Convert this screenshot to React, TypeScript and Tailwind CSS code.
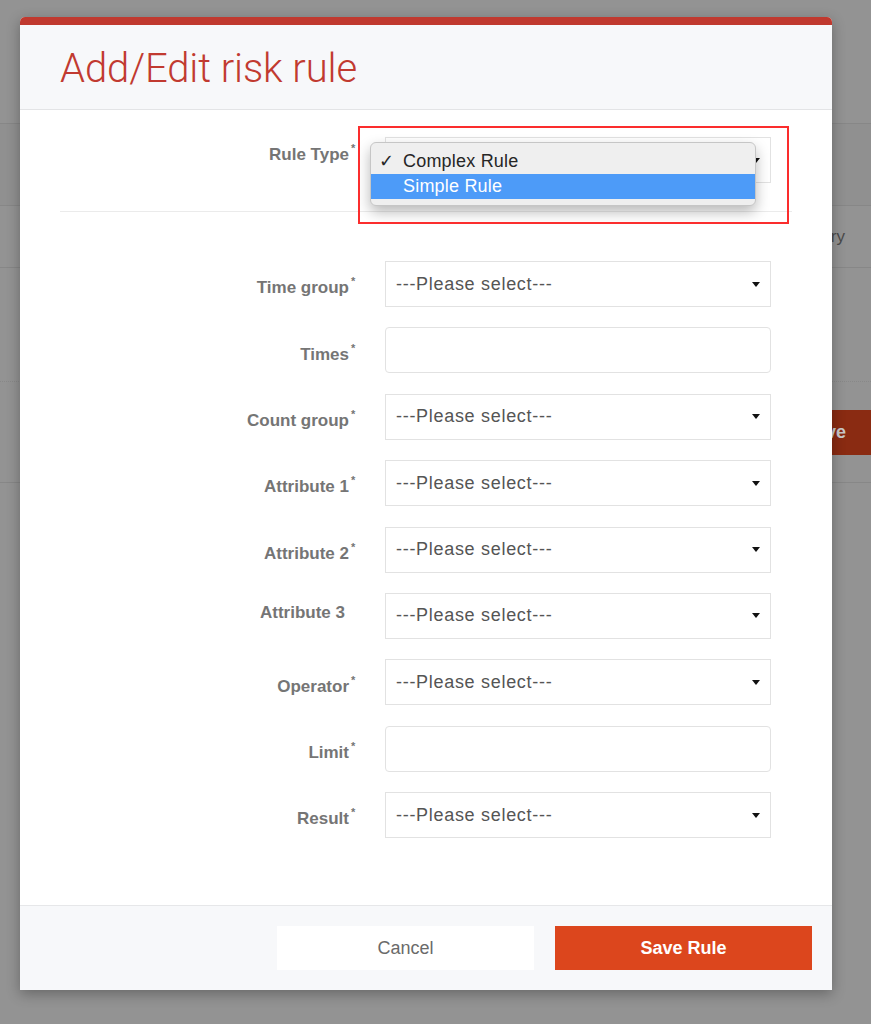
const fields = [
  { label: 'Time group', kind: 'select', required: true },
  { label: 'Times', kind: 'input', required: true },
  { label: 'Count group', kind: 'select', required: true },
  { label: 'Attribute 1', kind: 'select', required: true },
  { label: 'Attribute 2', kind: 'select', required: true },
  { label: 'Attribute 3', kind: 'select', required: false },
  { label: 'Operator', kind: 'select', required: true },
  { label: 'Limit', kind: 'input', required: true },
  { label: 'Result', kind: 'select', required: true },
];

function Caret() {
  return (
    <svg width="8" height="5" viewBox="0 0 8 5" className="shrink-0">
      <path d="M0 0 L8 0 L4 5 Z" fill="#111" />
    </svg>
  );
}

function Label({ text, required, className = '' }: { text: string; required: boolean; className?: string }) {
  return (
    <div className={`flex w-[297px] shrink-0 justify-end text-[17px] font-bold text-[#757575] ${className}`}>
      <span>{text}</span>
      {required ? <span className="mt-[1px] w-[8px] pl-[2px] text-[11px] leading-none">*</span> : null}
    </div>
  );
}

function FieldRow({ label, kind, required }: { label: string; kind: string; required: boolean }) {
  return (
    <div className="flex h-[46px] items-center">
      <Label text={label} required={required} className={required ? 'pt-[8px]' : 'pb-[6px] pr-[12px]'} />
      <div
        className={`ml-[28px] flex h-[46px] w-[386px] items-center justify-between border border-[#e2e2e2] bg-white pl-[10px] pr-[10px] ${
          kind === 'input' ? 'rounded-[4px]' : ''
        }`}
      >
        {kind === 'select' ? (
          <>
            <span className="text-[18px] tracking-[0.7px] text-[#555]">---Please select---</span>
            <Caret />
          </>
        ) : null}
      </div>
    </div>
  );
}

function BackgroundPage() {
  return (
    <div className="flex flex-col">
      <div className="h-[123px]" />
      <div className="h-[82px] border-t border-[#878787] bg-[#909090]" />
      <div className="flex h-[62px] items-center justify-end border-t border-[#878787] pr-[26px] text-[17px] text-[#4a4a4a]">
        Category
      </div>
      <div className="h-[114px] border-t border-[#878787]" />
      <div className="flex h-[101px] items-start justify-end border-t border-dotted border-[#888]">
        <div className="mt-[28px] flex h-[45px] w-[92px] items-center justify-center bg-[#8a2b12] text-[18px] font-bold text-[#c9c9c9]">
          Save
        </div>
      </div>
      <div className="border-t border-[#878787]" />
    </div>
  );
}

export default function App() {
  return (
    <div
      className="relative h-[1024px] w-[871px] overflow-hidden bg-[#939393]"
      style={{ fontFamily: '"Liberation Sans", Arial, sans-serif' }}
    >
      <BackgroundPage />

      <div className="absolute left-[20px] top-[17px] flex h-[973px] w-[812px] flex-col overflow-hidden rounded-t-[5px] bg-white shadow-[0_4px_14px_rgba(0,0,0,0.3)]">
        <div className="h-[8px] bg-[#c0392f]" />
        <div className="flex h-[85px] items-start border-b border-[#e3e4e6] bg-[#f7f8fa] pl-[40px] pt-[20px]">
          <h1
            className="text-[40px] font-light leading-[48px] tracking-[-0.1px] text-[#c13a30]"
            style={{ fontFamily: 'Roboto, "Liberation Sans", sans-serif' }}
          >
            Add/Edit risk rule
          </h1>
        </div>

        <div className="flex flex-1 flex-col px-[40px] pt-[27px]">
          <div className="relative flex h-[46px] items-center">
            <Label text="Rule Type" required className="pb-[10px]" />
            <div className="ml-[28px] flex h-[46px] w-[386px] items-center justify-end border border-[#e2e2e2] bg-white pr-[10px]">
              <Caret />
            </div>

            <div className="absolute left-[310px] top-[5px] w-[386px] rounded-[6px] border border-[#c6c6c6] bg-[#efefef] py-[6px] text-[18px] tracking-[0.2px] text-[#262626] shadow-[0_6px_14px_rgba(0,0,0,0.28)]">
              <div className="flex h-[25px] items-center">
                <span className="w-[32px] pl-[8px] text-[18px]">✓</span>
                <span>Complex Rule</span>
              </div>
              <div className="flex h-[25px] items-center bg-[#4d9bf8] pl-[32px] text-white">Simple Rule</div>
            </div>

            <div className="absolute left-[298px] top-[-11px] h-[98px] w-[431px] border-2 border-[#fb2d2d]" />
          </div>

          <div className="mt-[28px] border-t border-[#ebebeb]" />

          <div className="mt-[49px] flex flex-col gap-[20.4px]">
            {fields.map((f) => (
              <FieldRow key={f.label} {...f} />
            ))}
          </div>
        </div>

        <div className="flex h-[85px] justify-end gap-[21px] border-t border-[#e6e7e9] bg-[#f7f8fa] pr-[20px] pt-[20px]">
          <button className="flex h-[44px] w-[257px] items-center justify-center bg-white text-[18px] text-[#6a6a6a]">
            Cancel
          </button>
          <button className="flex h-[44px] w-[257px] items-center justify-center bg-[#dc461d] text-[18px] font-bold text-white">
            Save Rule
          </button>
        </div>
      </div>
    </div>
  );
}
